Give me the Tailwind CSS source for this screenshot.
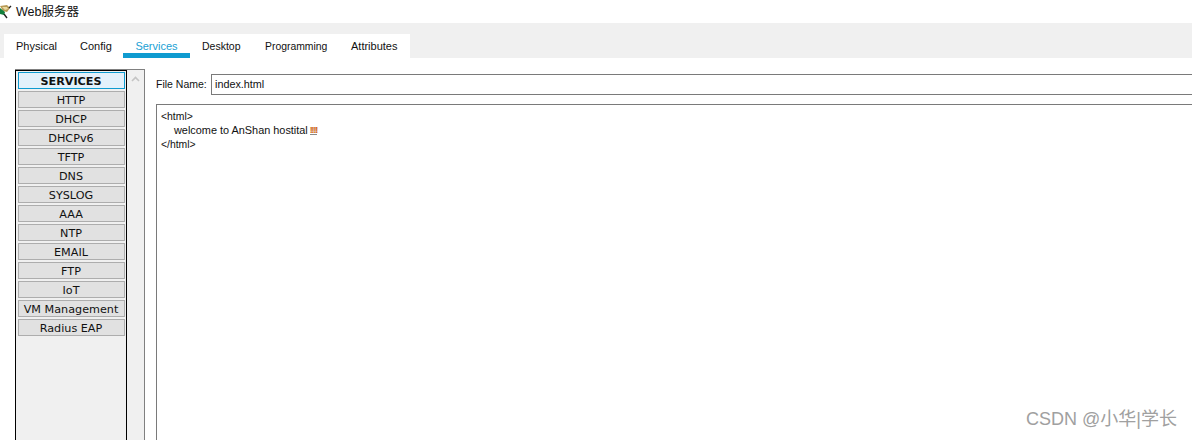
<!DOCTYPE html>
<html lang="en">
<head>
  <meta charset="UTF-8" />
  <title>Web服务器</title>
  <script src="https://cdn.jsdelivr.net/npm/@tailwindcss/browser@4"></script>
</head>
<body class="bg-white overflow-hidden font-['Liberation_Sans','Noto_Sans_CJK_SC',sans-serif]">
  <div class="relative w-[1192px] h-[440px] overflow-hidden">
    <!-- Title bar -->
    <div class="h-[23px] flex items-center bg-white">
      <svg class="w-[12px] h-[16px] shrink-0 -mt-[1px]" viewBox="0 0 12 16">
        <path d="M0 3 L7 2 L10 5 L7 9 L3 8 Z" fill="#b89a55" />
        <path d="M2 4 L7 4 L8 6 L5 7 Z" fill="#e8d9a0" />
        <path d="M0 5 L5 9 L4 12 L0 11 Z" fill="#12803c" />
        <path d="M4 11 L7 15 M9 5 L11 3" stroke="#222" stroke-width="1.4" />
      </svg>
      <span class="ml-1 pt-[2px] text-[12.5px] text-[#111]">Web服务器</span>
    </div>

    <!-- Tabs -->
    <div class="h-[35px] bg-[#f0f0f0] pl-1 pt-[11px]">
      <div class="flex w-[406px] h-[24px] bg-white text-[11px] text-[#111]">
        <div class="w-[119px] flex">
          <span class="pl-3 pt-[4px] w-[76px]">Physical</span>
          <span class="pt-[4px]">Config</span>
        </div>
        <div class="w-[67px] text-center pt-[4px] text-[#1a9fd4] border-b-[5px] border-[#0f9bd0]">Services</div>
        <span class="pl-3 pt-[5px] w-[75px] text-[10.5px]">Desktop</span>
        <span class="pt-[5px] w-[86px] text-[10.4px]">Programming</span>
        <span class="pt-[4px]">Attributes</span>
      </div>
    </div>

    <!-- Content -->
    <div class="flex pl-[15px] pt-[11px]">
      <div class="flex w-[130px] h-[400px] border-t border-r border-[#808080] bg-[#f0f0f0] shrink-0">
        <div class="w-[112px] border-x border-t border-black pt-[1px] pl-[2px] pr-[1px] flex flex-col gap-[2px] font-['DejaVu_Sans',sans-serif] text-[11.2px] text-[#111]">
          <button class="h-[17px] pt-[2px] pr-[1px] bg-[#e3f1fb] border border-[#0f9bd0] font-bold leading-none">SERVICES</button>
          <button class="h-[17px] pt-[2px] pr-[1px] bg-[#e1e1e1] border border-[#adadad] leading-none">HTTP</button>
          <button class="h-[17px] pt-[2px] pr-[1px] bg-[#e1e1e1] border border-[#adadad] leading-none">DHCP</button>
          <button class="h-[17px] pt-[2px] pr-[1px] bg-[#e1e1e1] border border-[#adadad] leading-none">DHCPv6</button>
          <button class="h-[17px] pt-[2px] pr-[1px] bg-[#e1e1e1] border border-[#adadad] leading-none">TFTP</button>
          <button class="h-[17px] pt-[2px] pr-[1px] bg-[#e1e1e1] border border-[#adadad] leading-none">DNS</button>
          <button class="h-[17px] pt-[2px] pr-[1px] bg-[#e1e1e1] border border-[#adadad] leading-none">SYSLOG</button>
          <button class="h-[17px] pt-[2px] pr-[1px] bg-[#e1e1e1] border border-[#adadad] leading-none">AAA</button>
          <button class="h-[17px] pt-[2px] pr-[1px] bg-[#e1e1e1] border border-[#adadad] leading-none">NTP</button>
          <button class="h-[17px] pt-[2px] pr-[1px] bg-[#e1e1e1] border border-[#adadad] leading-none">EMAIL</button>
          <button class="h-[17px] pt-[2px] pr-[1px] bg-[#e1e1e1] border border-[#adadad] leading-none">FTP</button>
          <button class="h-[17px] pt-[2px] pr-[1px] bg-[#e1e1e1] border border-[#adadad] leading-none">IoT</button>
          <button class="h-[17px] pt-[2px] pr-[1px] bg-[#e1e1e1] border border-[#adadad] leading-none">VM Management</button>
          <button class="h-[17px] pt-[2px] pr-[1px] bg-[#e1e1e1] border border-[#adadad] leading-none">Radius EAP</button>
        </div>
        <div class="flex-1 flex justify-center pt-[6px]">
          <svg class="w-[9px] h-[6px]" viewBox="0 0 9 6" fill="none"><path d="M1 5 L4.5 1.5 L8 5" stroke="#c4c4c4" stroke-width="1.6" /></svg>
        </div>
      </div>

      <div class="ml-[11px] w-[1100px] shrink-0 pt-[5px]">
        <div class="flex items-center h-[21px]">
          <span class="w-[55px] text-[10.5px] text-[#111]">File Name:</span>
          <div class="flex-1 h-[21px] border border-[#7a7a7a] pl-[3px] text-[10.8px] leading-[19px] text-[#111]">index.html</div>
        </div>
        <div class="mt-[9px] h-[340px] border border-[#7a7a7a] pl-[4px] pt-[5px] text-[10.4px] leading-[14px] text-[#111]">
          <div>&lt;html&gt;</div>
          <div class="pl-[13px] h-[14px] flex items-start text-[10.9px] leading-[13px]">welcome to AnShan hostital<span class="ml-[2px] mt-[2px] text-[9px] leading-[8px] tracking-[-1.2px] font-bold text-[#c9620f] border-b border-[#8a8a8a]">!!!!</span></div>
          <div>&lt;/html&gt;</div>
        </div>
      </div>
    </div>

    <!-- Watermark over the editor -->
    <div class="absolute left-[1026px] top-[408px] text-[18px] leading-[22px] text-[#a0a0a0]">CSDN @小华|学长</div>
  </div>
</body>
</html>
